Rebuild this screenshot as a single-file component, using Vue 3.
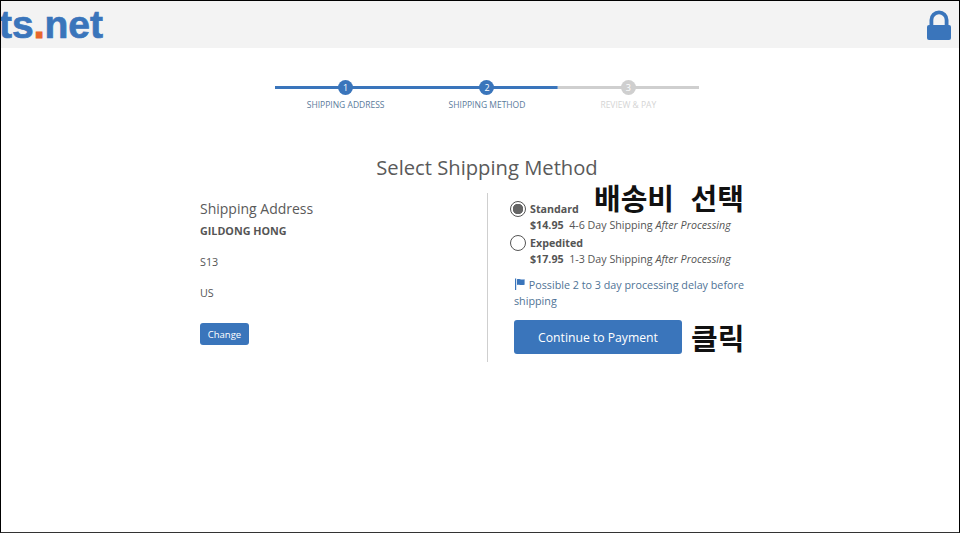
<script setup>
const steps = [
  { n: 1, label: 'SHIPPING ADDRESS', state: 'done' },
  { n: 2, label: 'SHIPPING METHOD', state: 'done' },
  { n: 3, label: 'REVIEW & PAY', state: 'todo' },
];

const methods = [
  { name: 'Standard', price: '$14.95', days: '4-6 Day Shipping', selected: true },
  { name: 'Expedited', price: '$17.95', days: '1-3 Day Shipping', selected: false },
];
</script>

<template>
  <div class="page">
    <header class="top">
      <div class="logo">ts<span class="dot">.</span>net</div>
      <svg class="lock" viewBox="0 0 24 30" width="24" height="30">
        <path d="M2.5 17V10a9.5 9.5 0 0 1 19 0v7h-3.8V10a5.7 5.7 0 0 0-11.4 0v7z" fill="#3a75bb" />
        <rect x="0" y="15" width="24" height="15" rx="2" fill="#3a75bb" />
      </svg>
    </header>

    <div class="stepper">
      <div v-for="s in steps" :key="s.n" class="step" :class="s.state">
        <div class="track"><span class="num">{{ s.n }}</span></div>
        <div class="label">{{ s.label }}</div>
      </div>
    </div>

    <h1 class="title">Select Shipping Method</h1>

    <div class="cols">
      <section class="left">
        <h2>Shipping Address</h2>
        <p class="name">GILDONG HONG</p>
        <p class="line">S13</p>
        <p class="line">US</p>
        <button class="change">Change</button>
      </section>

      <section class="right">
        <div class="notes">배송비 선택</div>
        <div v-for="m in methods" :key="m.name" class="method">
          <span class="radio" :class="{ on: m.selected }"></span>
          <div class="method-text">
            <div class="method-name">{{ m.name }}</div>
            <div><b>{{ m.price }}</b>&nbsp; {{ m.days }} <i>After Processing</i></div>
          </div>
        </div>
        <p class="delay">
          <svg class="flag" viewBox="0 0 12 12" width="12" height="12">
            <path d="M1 0.5h1.2V12H1z" fill="#3a75bb" />
            <path d="M3 1.2c2-1 3.6 0.8 7.6 0v5.6c-4 1-5.6-0.8-7.6 0.1z" fill="#3a75bb" />
          </svg>
          Possible 2 to 3 day processing delay before shipping
        </p>
        <div class="action">
          <button class="continue">Continue to Payment</button>
          <span class="click">클릭</span>
        </div>
      </section>
    </div>
  </div>
</template>

<style scoped>
.page {
  box-sizing: border-box;
  width: 960px;
  height: 533px;
  border: 1px solid #000;
  border-bottom-color: #333;
  background: #fff;
  overflow: hidden;
  font-family: "Open Sans", "Noto Sans", sans-serif;
  color: #555;
}

.top {
  height: 47px;
  background: #f3f3f3;
  display: flex;
  align-items: center;
  justify-content: space-between;
  padding-right: 8px;
  overflow: hidden;
}

/* the logo runs off the left edge in the reference too */
.logo {
  font-family: "Liberation Sans", Arial, sans-serif;
  font-weight: 700;
  font-size: 39px;
  -webkit-text-stroke: 0.7px #3a75bb;
  color: #3a75bb;
  margin: 0 0 0 -2px;
  white-space: nowrap;
}

.dot {
  color: #e8662a;
  -webkit-text-stroke: 1.2px #e8662a;
}

.lock {
  display: block;
  margin-top: 1px;
}

.stepper {
  display: flex;
  width: 424px;
  margin: 31px 0 0 274px;
}

.step {
  flex: 1;
  text-align: center;
}

.track {
  height: 16px;
  display: flex;
  align-items: center;
  justify-content: center;
  background: linear-gradient(#3a75bb, #3a75bb) center / 100% 3px no-repeat;
}

.todo .track {
  background-image: linear-gradient(#cfcfcf, #cfcfcf);
}

.num {
  width: 15px;
  height: 15px;
  border-radius: 50%;
  background: #3a75bb;
  color: #fff;
  font-size: 9px;
  line-height: 15px;
}

.todo .num {
  background: #cfcfcf;
}

.label {
  margin-top: 4px;
  font-size: 8.5px;
  line-height: 12px;
  color: #5b7b9b;
}

.todo .label {
  color: #d4d4d4;
}

.title {
  margin: 42px 0 0;
  padding-left: 14px;
  text-align: center;
  font-size: 20.2px;
  line-height: 28px;
  font-weight: 400;
  color: #5a5a5a;
}

.cols {
  display: flex;
  margin: 12px 0 0 199px;
}

.left {
  box-sizing: border-box;
  width: 288px;
  height: 169px;
  border-right: 1px solid #cfcfcf;
  padding-top: 6px;
}

.left h2 {
  margin: 0;
  font-size: 14px;
  line-height: 19px;
  font-weight: 400;
  color: #5a5a5a;
}

.name {
  margin: 5px 0 0;
  font-size: 10.75px;
  line-height: 16px;
  font-weight: 700;
}

.line {
  margin: 15px 0 0;
  font-size: 10.75px;
  line-height: 16px;
}

.change {
  display: block;
  margin-top: 22px;
  width: 49px;
  height: 22px;
  padding: 0;
  border: none;
  border-radius: 3px;
  background: #3a75bb;
  color: #fff;
  font-family: inherit;
  font-size: 9.5px;
}

.right {
  position: relative;
  padding: 8px 0 0 22px;
  width: 240px;
  font-size: 10.7px;
  line-height: 16px;
}

.notes {
  position: absolute;
  left: 106px;
  top: -12px;
  font-family: "Noto Sans CJK KR", sans-serif;
  font-size: 29px;
  word-spacing: 10px;
  line-height: 32px;
  font-weight: 700;
  color: #111;
  white-space: nowrap;
}

.method {
  display: flex;
  gap: 4px;
  margin-bottom: 2px;
}

.radio {
  box-sizing: border-box;
  flex: none;
  width: 16px;
  height: 16px;
  border: 1px solid #555;
  border-radius: 50%;
  background: #fff;
}

.radio.on {
  background: radial-gradient(circle, #666 0 5px, #fff 5.5px);
}

.method-name {
  font-weight: 700;
}

.method-text {
  white-space: nowrap;
}

.delay {
  margin: 10px 0 0 4px;
  width: 240px;
  font-size: 10.75px;
  line-height: 16px;
  color: #4f7396;
}

.flag {
  vertical-align: -1px;
}

.action {
  display: flex;
  align-items: center;
  gap: 9px;
  margin: 11px 0 0 4px;
}

.continue {
  width: 168px;
  height: 34px;
  padding: 0;
  border: none;
  border-radius: 3px;
  background: #3a75bb;
  color: #fff;
  font-family: inherit;
  font-size: 12.2px;
}

.click {
  font-family: "Noto Sans CJK KR", sans-serif;
  font-size: 29px;
  line-height: 32px;
  font-weight: 700;
  color: #111;
  white-space: nowrap;
}
</style>
